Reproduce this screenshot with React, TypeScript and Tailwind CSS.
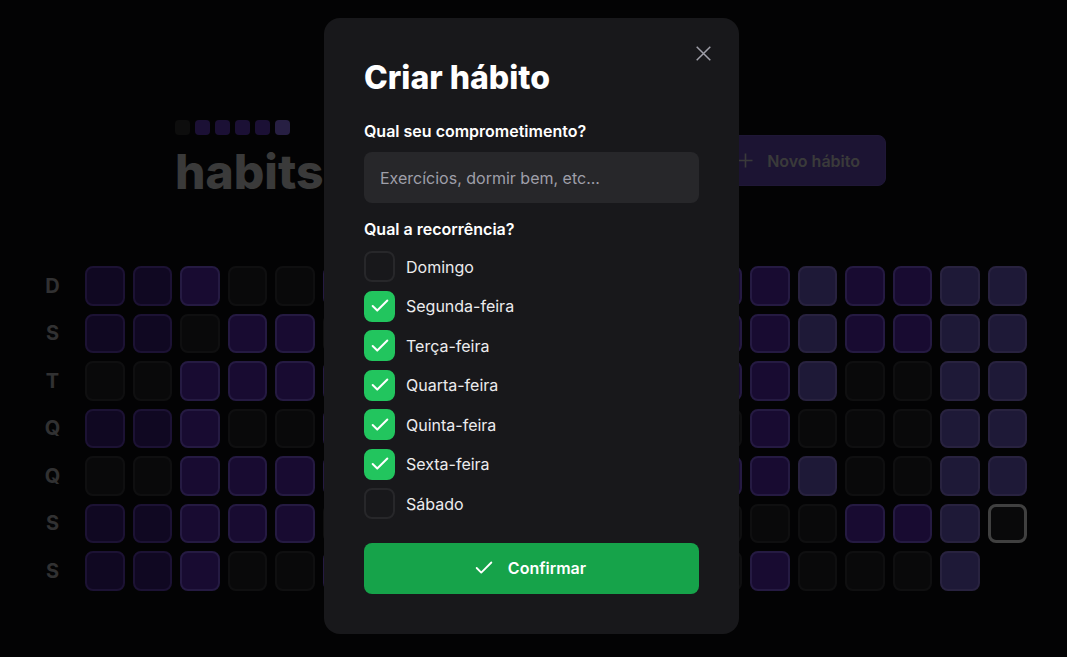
import { Check } from "lucide-react";

type Level = "A" | "B" | "C" | "d" | "T" | "x";

const WEEK_DAYS = ["D", "S", "T", "Q", "Q", "S", "S"];

// one string per weekday row, 20 columns each
const ROWS: string[] = [
  "AABdd" + "BBdBBdBB" + "BBCBBCC",
  "AAdBB" + "dBBBdBBd" + "BBCBBCC",
  "ddBBB" + "BdBBBBdB" + "BBCddCC",
  "AABdd" + "BBdBBdBB" + "dBdddCC",
  "ddBBB" + "BBBdBBBd" + "BBCddCC",
  "AABBB" + "dBBBBdBB" + "dddBBCT",
  "AABdd" + "BBdBBBdB" + "dBdddCx",
];

const SQUARE_STYLE: Record<Exclude<Level, "x">, string> = {
  d: "bg-[#18181b] border-2 border-[#27272a]",
  A: "bg-[#2a1455] border-2 border-[#462d82]",
  B: "bg-[#3c1c7a] border-2 border-[#5c41a5]",
  C: "bg-[#4b3f8a] border-2 border-[#64559e]",
  T: "bg-[#18181b] border-[3px] border-[#a0a0a0]",
};

const DAYS = [
  { label: "Domingo", checked: false },
  { label: "Segunda-feira", checked: true },
  { label: "Terça-feira", checked: true },
  { label: "Quarta-feira", checked: true },
  { label: "Quinta-feira", checked: true },
  { label: "Sexta-feira", checked: true },
  { label: "Sábado", checked: false },
];

function squaresInFlowOrder(): Level[] {
  const out: Level[] = [];
  for (let c = 0; c < 20; c++) {
    for (let r = 0; r < 7; r++) {
      const v = ROWS[r][c] as Level;
      if (v !== "x") out.push(v);
    }
  }
  return out;
}

function Header() {
  const dots = ["bg-[#212121]", "bg-[#442985]", "bg-[#442985]", "bg-[#442985]", "bg-[#442985]", "bg-[#624fa8]"];
  return (
    <header className="ml-[142.5px] flex w-[711px] items-start justify-between">
      <div className="flex flex-col">
        <div className="flex gap-[5px]">
          {dots.map((d, i) => (
            <div key={i} className={`h-[15px] w-[15px] rounded-[4px] ${d}`} />
          ))}
        </div>
        <span className="mt-[13px] text-[48px] font-extrabold leading-none text-[#919191]">
          habits
        </span>
      </div>
      <button className="mt-[15px] flex h-[51px] items-center gap-[14px] rounded-lg border border-[#4e3b88] bg-[#46347f] pl-6 pr-[25px] font-semibold text-[#929292]">
        <svg width="15" height="15" viewBox="0 0 15 15" fill="none" stroke="currentColor" strokeWidth="1.6">
          <path d="M7.5 0.5v14M0.5 7.5h14" />
        </svg>
        Novo hábito
      </button>
    </header>
  );
}

function SummaryTable() {
  const squares = squaresInFlowOrder();
  return (
    <div className="mt-[70px] flex gap-[12.5px]">
      <div className="grid w-10 grid-rows-7 gap-2">
        {WEEK_DAYS.map((d, i) => (
          <div key={i} className="flex h-[39.5px] w-10 items-center justify-center text-xl font-bold text-[#7a7a7e]">
            {d}
          </div>
        ))}
      </div>
      <div className="grid grid-flow-col grid-rows-7 gap-2">
        {squares.map((s, i) => (
          <div key={i} className={`h-[39.5px] w-[39.5px] rounded-lg ${SQUARE_STYLE[s as Exclude<Level, "x">]}`} />
        ))}
      </div>
    </div>
  );
}

function NewHabitDialog() {
  return (
    <div className="fixed inset-0 flex items-start justify-center bg-black/60 pt-[18px]">
      <div className="relative mr-1 w-[415px] rounded-2xl bg-[#18181b] p-10">
        <button className="absolute right-7 top-7 text-zinc-400">
          <svg width="15" height="15" viewBox="0 0 15 15" fill="none" stroke="currentColor" strokeWidth="1.5">
            <path d="M0.7 0.7l13.6 13.6M14.3 0.7L0.7 14.3" />
          </svg>
        </button>
        <h2 className="text-[32px] font-extrabold leading-[40px] text-white">Criar hábito</h2>
        <form className="mt-[21px] flex flex-col">
          <label className="font-semibold leading-6 text-white">Qual seu comprometimento?</label>
          <input
            type="text"
            placeholder="Exercícios, dormir bem, etc..."
            className="mt-[9px] h-[51px] rounded-lg bg-[#27272a] px-4 text-white outline-none placeholder:text-zinc-400"
          />
          <label className="mt-[14px] font-semibold leading-6 text-white">Qual a recorrência?</label>
          <div className="mt-[10px] flex flex-col gap-[8.5px]">
            {DAYS.map((day) => (
              <div key={day.label} className="flex items-center gap-3">
                <div
                  className={`flex h-[31px] w-[31px] items-center justify-center rounded-lg border-2 ${
                    day.checked ? "border-[#22c55e] bg-[#22c55e]" : "border-[#27272a] bg-[#18181b]"
                  }`}
                >
                  {day.checked && <Check size={22} strokeWidth={2.2} className="text-white" />}
                </div>
                <span className="-ml-px leading-6 text-[#ececee]">{day.label}</span>
              </div>
            ))}
          </div>
          <button
            type="button"
            className="mt-[23.5px] flex h-[51px] items-center justify-center gap-[13px] rounded-lg bg-[#16a34a] pr-1 font-semibold text-white"
          >
            <Check size={22} strokeWidth={2} />
            Confirmar
          </button>
        </form>
      </div>
    </div>
  );
}

export default function App() {
  return (
    <div className="min-h-screen bg-[#09090a] pl-[32.5px] pt-[120px] font-['Inter',sans-serif]">
      <div className="flex w-[994px] flex-col">
        <Header />
        <SummaryTable />
      </div>
      <NewHabitDialog />
    </div>
  );
}
